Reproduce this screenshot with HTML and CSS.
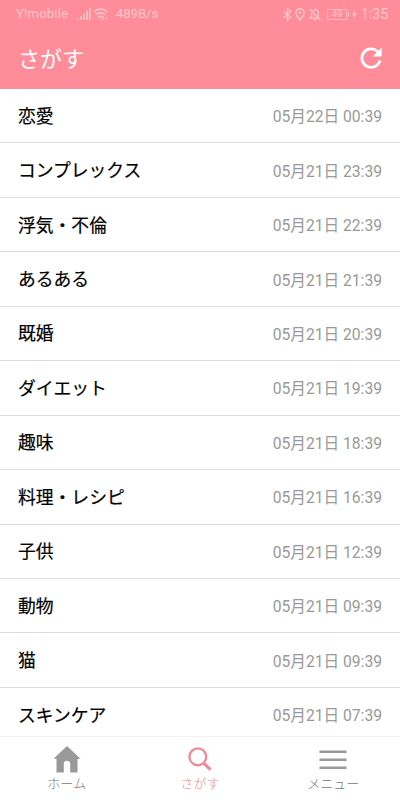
FILE: index.html
```html
<!DOCTYPE html>
<html lang="ja">
<head>
    <meta charset="UTF-8">
    <meta name="viewport" content="width=device-width, initial-scale=1.0">
    <title>さがす</title>
    <link rel="stylesheet" href="styles.css">
</head>
<body>
    <header class="header">
        <div class="status-bar">
            <span class="carrier">Y!mobile</span>
            <svg class="signal" width="14" height="13" viewBox="0 0 14 13" fill="currentColor">
                <path d="M0 10.5h1.6V12H0zM3 8.5h1.6V12H3zM6 6h1.6v6H6zM9 3h1.6v9H9zM12 0h1.6v12H12z"/>
            </svg>
            <svg class="wifi" width="15" height="13" viewBox="0 0 15 13" fill="none" stroke="currentColor" stroke-width="1.4">
                <path d="M.6 4.2Q7.5-2 14.4 4.2M2.8 6.8q4.7-4 9.4 0M5 9.2q2.5-2 5 0"/>
                <path d="M6.3 10.5h2.4L7.5 12z" fill="currentColor" stroke="none"/>
                <path d="M10.5 9v3M13 9v3" stroke-width="1"/>
            </svg>
            <span class="speed">489B/s</span>
            <div class="status-right">
                <svg width="9" height="13" viewBox="0 0 9 13" fill="none" stroke="currentColor" stroke-width="1.2">
                    <path d="M.8 3.5l7 6-3.4 2.7V.8l3.4 2.7-7 6"/>
                </svg>
                <svg class="pin" width="10" height="13" viewBox="0 0 10 13" fill="none" stroke="currentColor" stroke-width="1.4">
                    <path d="M5 12C3.5 9.7.8 7.5.8 4.9a4.2 4.2 0 0 1 8.4 0C9.2 7.5 6.5 9.7 5 12z"/>
                    <circle cx="5" cy="4.8" r="1.3" fill="currentColor" stroke="none"/>
                </svg>
                <svg class="bell" width="12" height="13" viewBox="0 0 12 13" fill="none" stroke="currentColor" stroke-width="1.3">
                    <path d="M.6 1l10.8 11M4 2.5C7 .8 9.3 2.8 9.3 5.5v3M2.6 4.5v4L1 10.2h8.5M5 11.8h2M6 .5v1.5"/>
                </svg>
                <div class="battery">49</div>
                <svg class="bolt" width="5" height="9" viewBox="0 0 5 9" fill="currentColor">
                    <path d="M3.2 0L.2 5h2l-.5 4 3.1-5.2h-2z"/>
                </svg>
                <span class="clock">1:35</span>
            </div>
        </div>
        <div class="title-bar">
            <h1 class="title">さがす</h1>
            <svg class="reload" width="22" height="22" viewBox="0 0 22 22">
                <path d="M17.6 4.6A9.2 9.2 0 1 0 20 13.5" fill="none" stroke="#fff" stroke-width="2.8"/>
                <path d="M21.6.4v9h-9z" fill="#fff"/>
            </svg>
        </div>
    </header>

    <ul class="list">
        <li class="row"><span class="name">恋愛</span><span class="date">05月22日 00:39</span></li>
        <li class="row"><span class="name">コンプレックス</span><span class="date">05月21日 23:39</span></li>
        <li class="row"><span class="name">浮気・不倫</span><span class="date">05月21日 22:39</span></li>
        <li class="row"><span class="name">あるある</span><span class="date">05月21日 21:39</span></li>
        <li class="row"><span class="name">既婚</span><span class="date">05月21日 20:39</span></li>
        <li class="row"><span class="name">ダイエット</span><span class="date">05月21日 19:39</span></li>
        <li class="row"><span class="name">趣味</span><span class="date">05月21日 18:39</span></li>
        <li class="row"><span class="name">料理・レシピ</span><span class="date">05月21日 16:39</span></li>
        <li class="row"><span class="name">子供</span><span class="date">05月21日 12:39</span></li>
        <li class="row"><span class="name">動物</span><span class="date">05月21日 09:39</span></li>
        <li class="row"><span class="name">猫</span><span class="date">05月21日 09:39</span></li>
        <li class="row"><span class="name">スキンケア</span><span class="date">05月21日 07:39</span></li>
    </ul>

    <nav class="tabs">
        <a class="tab">
            <svg width="28" height="28" viewBox="0 0 28 28" fill="currentColor">
                <path d="M14 1L.5 13.7h3v13.8h7.3V19a3.2 3.2 0 0 1 6.4 0v8.500h7.300V13.700h3z"/>
            </svg>
            <span>ホーム</span>
        </a>
        <a class="tab active">
            <svg width="28" height="28" viewBox="0 0 28 28" fill="none" stroke="currentColor">
                <circle cx="11.8" cy="11.8" r="8.4" stroke-width="2.4"/>
                <path d="M17.5 18l7 6.700" stroke-width="3.2"/>
            </svg>
            <span>さがす</span>
        </a>
        <a class="tab">
            <svg width="28" height="28" viewBox="0 0 28 28" fill="currentColor">
                <path d="M.5 5.5h27v2.400H.5zM.5 13.500h27v2.400H.5zM.5 21.500h27v2.400H.5z"/>
            </svg>
            <span>メニュー</span>
        </a>
    </nav>
</body>
</html>
```
FILE: styles.css
```css
* {
    box-sizing: border-box;
}
body {
    margin: 0;
    height: 800px;
    display: flex;
    flex-direction: column;
    overflow: hidden;
    background: #fff;
    font-family: Roboto, "Noto Sans CJK JP", sans-serif;
}
.header {
    flex: none;
    height: 89px;
    background: #ff8c98;
    color: #fff;
}
.status-bar {
    display: flex;
    align-items: center;
    height: 28px;
    padding: 0 13px 0 16px;
    color: #ffc8ce;
    font-size: 13px;
    line-height: 28px;
}
.carrier {
    width: 52px;
    letter-spacing: 0.2px;
}
.signal {
    margin-left: 9px;
}
.wifi {
    margin-left: 2px;
}
.speed {
    margin-left: 8px;
}
.status-right {
    display: flex;
    align-items: center;
    margin-left: auto;
}
.pin {
    margin-left: 3px;
}
.bell {
    margin-left: 4px;
}
.battery {
    position: relative;
    width: 20px;
    height: 11px;
    margin-left: 6px;
    border: 1px solid #ffb9c0;
    font-size: 9px;
    line-height: 9px;
    text-align: center;
}
.battery::after {
    content: "";
    position: absolute;
    top: 2px;
    right: -3px;
    width: 1px;
    height: 5px;
    background: #ffc8ce;
}
.bolt {
    margin-left: 5px;
}
.clock {
    margin-left: 4px;
    font-size: 14px;
    width: 26px;
    white-space: nowrap;
}
.title-bar {
    display: flex;
    align-items: center;
    justify-content: space-between;
    height: 60px;
    padding: 0 18px;
}
.title {
    margin: 0;
    padding-bottom: 3px;
    font-size: 22px;
    font-weight: 400;
}
.list {
    flex: 1;
    min-height: 0;
    margin: 0;
    padding: 0;
    overflow: hidden;
    list-style: none;
}
.row {
    display: flex;
    align-items: center;
    justify-content: space-between;
    height: 54.45px;
    padding: 0 18px;
    border-bottom: 1px solid #dcdcdc;
}
.name {
    padding-bottom: 2px;
    color: #000;
    font-size: 17.8px;
    font-weight: 400;
    -webkit-text-stroke: 0.2px #000;
}
.date {
    color: #999;
    font-size: 15.65px;
}
.tabs {
    flex: none;
    display: flex;
    height: 64px;
    border-top: 1px solid #f3f3f3;
    background: #fff;
}
.tab {
    flex: 1;
    display: flex;
    flex-direction: column;
    align-items: center;
    padding-top: 8px;
    color: #999;
    font-size: 13px;
    line-height: 22px;
}
.tab span {
    font-weight: 300;
    color: #777;
}
.active,
.active span {
    color: #f08a96;
}
```
